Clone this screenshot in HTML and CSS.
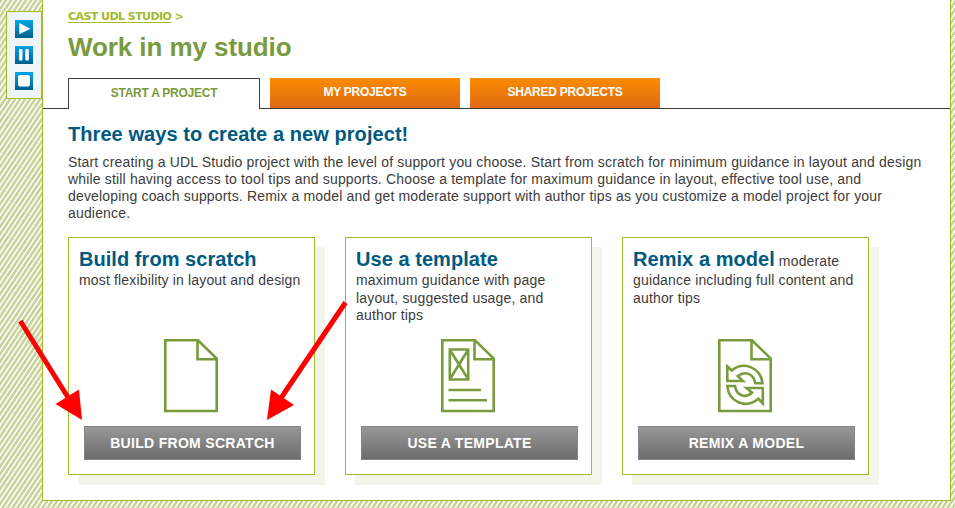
FILE: index.html
```
<!DOCTYPE html>
<html lang="en">
<head>
<meta charset="utf-8">
<title>CAST UDL Studio</title>
<link rel="stylesheet" href="styles.css">
</head>
<body>
<div class="page">
  <aside class="player">
    <button class="ctl" aria-label="Play"><svg viewBox="0 0 18 18"><path d="M4.300 3V14.300l11.200-5.600z"/></svg></button>
    <button class="ctl" aria-label="Pause"><svg viewBox="0 0 18 18"><rect x="4" y="3" width="3.500" height="11.500" rx="1"/><rect x="10.300" y="3" width="3.500" height="11.500" rx="1"/></svg></button>
    <button class="ctl" aria-label="Stop"><svg viewBox="0 0 18 18"><rect x="3" y="3" width="12" height="11.500" rx="2"/></svg></button>
  </aside>
  <main class="panel">
    <nav class="crumbs"><a>CAST UDL STUDIO</a> &gt;</nav>
    <h1>Work in my studio</h1>
    <div class="tabs">
      <a class="tab active">START A PROJECT</a>
      <a class="tab">MY PROJECTS</a>
      <a class="tab">SHARED PROJECTS</a>
    </div>
    <section class="content">
      <h2>Three ways to create a new project!</h2>
      <p class="intro">Start creating a UDL Studio project with the level of support you choose. Start from scratch for minimum guidance in layout and design<br>while still having access to tool tips and supports. Choose a template for maximum guidance in layout, effective tool use, and<br>developing coach supports. Remix a model and get moderate support with author tips as you customize a model project for your<br>audience.</p>
      <div class="cards">
        <article class="card">
          <p class="desc"><strong>Build from scratch</strong><br>most flexibility in layout and design</p>
          <svg class="doc" viewBox="0 0 54 74"><path d="M1.300 1.300H34L52.700 19.500V72H1.300zM33.500 1.300V20.300H52.700"/></svg>
          <a class="btn">BUILD FROM SCRATCH</a>
        </article>
        <article class="card">
          <p class="desc"><strong>Use a template</strong><br>maximum guidance with page<br>layout, suggested usage, and<br>author tips</p>
          <svg class="doc" viewBox="0 0 54 74"><path d="M1.300 1.300H34L52.700 19.500V72H1.300zM33.500 1.300V20.300H52.700M8.800 10.500H27.200V40.500H8.800zM9 11L27 40M27 11L9 40M7.500 51H40M7.500 61.200H46"/></svg>
          <a class="btn">USE A TEMPLATE</a>
        </article>
        <article class="card">
          <p class="desc"><strong>Remix a model</strong> moderate<br>guidance including full content and<br>author tips</p>
          <svg class="doc" viewBox="0 0 54 74"><path d="M1.300 1.300H34L52.700 19.500V72H1.300zM33.500 1.300V20.300H52.700"/><path d="M9.300 27.500L13.800 31.500C26 21.500 43 29 44.500 44.300H37.300C35.500 34.500 27 31.500 19.800 37L25 42H9.300zM9.300 47H17C18.500 56.500 27.500 60 34 53.500L28.500 49H44.800V64.500L40.500 59.800C27.500 70.500 10.500 62.500 9.300 47z"/></svg>
          <a class="btn">REMIX A MODEL</a>
        </article>
      </div>
    </section>
  </main>
  <svg class="arrows" viewBox="0 0 955 508"><path class="shaft" d="M20.300 321L69 399M345.500 302.500L281 398"/><path class="head" d="M82 420L55.500 404L79 389.500zM267 420L271 389.500L294 405z"/></svg>
</div>
</body>
</html>
```
FILE: styles.css
```
* { box-sizing: border-box; }
body {
  margin: 0;
  font-family: "Liberation Sans", Arial, sans-serif;
  color: #3c3c3c;
  background: #fff;
}
.page {
  position: relative;
  display: flex;
  align-items: flex-start;
  width: 955px;
  height: 508px;
  padding-left: 6px;
  overflow: hidden;
  background: repeating-linear-gradient(123.700deg, #c9d39c 0, #c9d39c 2px, #fafbf5 2.500px, #fafbf5 3.660px, #c9d39c 4.160px);
}
.player {
  display: flex;
  flex-direction: column;
  gap: 8px;
  width: 36px;
  height: 88px;
  margin-top: 11px;
  padding: 8px;
  border: 1px solid #a2bb2d;
  background: #eef4f7;
}
.ctl {
  width: 18px;
  height: 18px;
  padding: 0;
  border: 0;
  background: linear-gradient(#00a7e8, #005f8c);
}
.ctl svg { display: block; width: 18px; height: 18px; fill: #fff; }
.panel {
  width: 909px;
  height: 501px;
  border: 1px solid #a2bb2d;
  border-top: 0;
  background: #fff;
}
.crumbs {
  height: 14px;
  margin: 10px 0 0 25px;
  font: bold 11px/14px "DejaVu Sans", Verdana, sans-serif;
  color: #a2bb2d;
  white-space: nowrap;
  letter-spacing: -0.550px;
}
.crumbs a { text-decoration: underline; text-underline-offset: 2px; }
h1 {
  margin: 7px 0 0 25px;
  font-size: 26px;
  line-height: 32px;
  letter-spacing: -0.080px;
  color: #799a3d;
}
.tabs {
  display: flex;
  gap: 10px;
  height: 31px;
  margin-top: 15px;
  padding-left: 25px;
  border-bottom: 1px solid #3c3c3c;
}
.tab {
  width: 190px;
  height: 30px;
  font-size: 12px;
  font-weight: bold;
  line-height: 28px;
  letter-spacing: -0.240px;
  text-align: center;
  color: #fff;
  background: linear-gradient(#fb8b00, #e06a14);
}
.tab.active {
  width: 192px;
  height: 31px;
  border: 1px solid #3c3c3c;
  border-bottom: 0;
  color: #799a3d;
  background: #fff;
}
.content { padding: 14px 0 0 25px; }
h2 { margin: 0; font-size: 20px; line-height: 23px; letter-spacing: 0.070px; color: #00597f; }
.intro { margin: 8px 0 0; font-size: 14px; line-height: 17px; letter-spacing: 0.170px; white-space: nowrap; }
.cards { display: flex; gap: 30px; margin-top: 15px; }
.card {
  display: flex;
  flex-direction: column;
  width: 247px;
  height: 238px;
  padding: 8px 10px 14px;
  border: 1px solid #a2bb2d;
  background: #fff;
  box-shadow: 10px 10px 0 #f2f5ea;
}
.desc { height: 93px; margin: 0; font-size: 14px; line-height: 17.500px; letter-spacing: 0.160px; white-space: nowrap; }
.desc strong { font-size: 20px; line-height: 26px; letter-spacing: 0.050px; color: #00597f; }
.doc {
  width: 54px;
  height: 74px;
  margin-left: 85px;
  fill: none;
  stroke: #799a3d;
  stroke-width: 2.600px;
}
.btn {
  width: 217px;
  height: 34px;
  margin: 13px 0 0 5px;
  border: 1px solid #858585;
  font-size: 14px;
  font-weight: bold;
  line-height: 32px;
  letter-spacing: 0.300px;
  text-align: center;
  color: #fff;
  background: linear-gradient(#989898, #6c6c6c);
}
.arrows { position: absolute; inset: 0; width: 955px; height: 508px; pointer-events: none; }
.shaft { fill: none; stroke: #f00; stroke-width: 5px; }
.head { fill: #f00; }
```
